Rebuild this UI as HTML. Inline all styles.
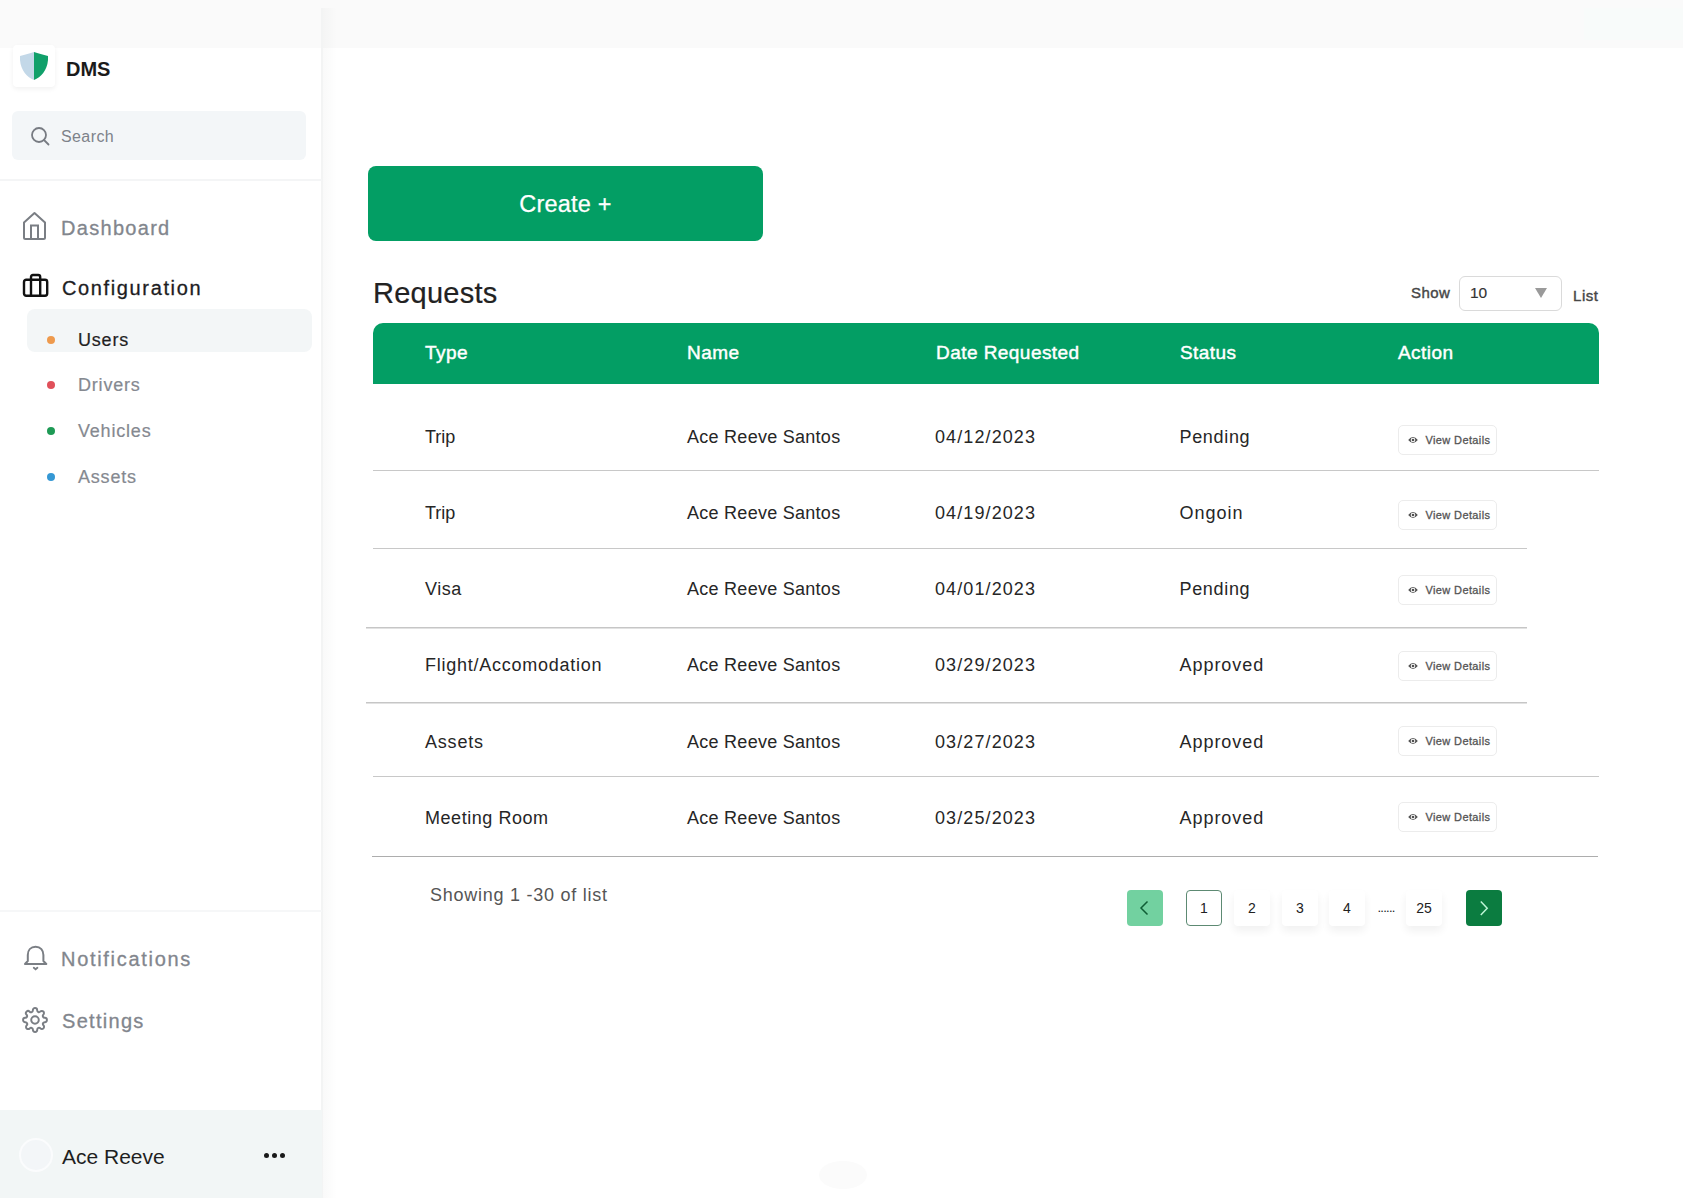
<!DOCTYPE html>
<html><head><meta charset="utf-8">
<style>
*{margin:0;padding:0;box-sizing:border-box}
html,body{width:1683px;height:1198px;overflow:hidden;background:#fff;font-family:"Liberation Sans",sans-serif}
.a{position:absolute;line-height:1;white-space:nowrap}
#topbar{position:absolute;left:0;top:0;width:1683px;height:48px;background:#fafafa}
#side{position:absolute;left:0;top:48px;width:322px;height:1150px;background:#fff}
#sline{position:absolute;left:321px;top:8px;width:2px;height:1190px;background:#f3f4f4}
#sshade{position:absolute;left:323px;top:8px;width:14px;height:1190px;background:linear-gradient(to right,rgba(0,20,10,.025),rgba(0,20,10,0))}
.logo{position:absolute;left:13px;top:45px;width:42px;height:42px;background:#fff;border-radius:4px;box-shadow:0 2px 5px rgba(0,0,0,.06)}
.search{position:absolute;left:12px;top:111px;width:294px;height:49px;background:#f3f6f8;border-radius:6px}
.hr1{position:absolute;left:0;top:179px;width:322px;height:2px;background:#f4f5f6}
.hr2{position:absolute;left:0;top:910px;width:322px;height:2px;background:#f6f7f8}
.nav{font-size:20px;color:#82868d;letter-spacing:1.3px;-webkit-text-stroke:.3px currentColor}
.sub{font-size:18px;color:#858990;letter-spacing:.8px;-webkit-text-stroke:.2px currentColor}
.dot{position:absolute;width:8px;height:8px;border-radius:50%}
.usersbg{position:absolute;left:27px;top:309px;width:285px;height:43px;background:#f3f6f7;border-radius:8px}
.foot{position:absolute;left:0;top:1110px;width:322px;height:88px;background:#f2f6f6}
.btn{position:absolute;left:368px;top:166px;width:395px;height:75px;background:#039e64;border-radius:8px}
.thead{position:absolute;left:373px;top:323px;width:1226px;height:61px;background:#039e64;border-radius:10px 10px 0 0}
.th{font-size:19px;color:#fff;-webkit-text-stroke:.45px #fff;letter-spacing:.45px}
.td{font-size:18px;color:#262626}
.dt{letter-spacing:1.1px}
.sep{position:absolute;height:1px;background:#c8c8c8}
.vd{position:absolute;left:1398px;width:99px;height:30px;border:1px solid #ececec;border-radius:5px;background:#fff}
.vd span{position:absolute;left:26.5px;top:8.8px;font-size:11px;line-height:1;color:#555;-webkit-text-stroke:.3px #555;letter-spacing:.38px}
.vd svg{position:absolute;left:9px;top:8.5px}
.pg{position:absolute;top:890px;width:36px;height:36px;border-radius:4px;background:#fff;font-size:14px;color:#222;text-align:center;line-height:36px}
.pgs{box-shadow:0 5px 8px rgba(0,0,0,.06)}
</style></head><body>
<div id="topbar"></div>
<div class="a" style="left:1584px;top:8px;width:99px;height:32px;background:#f8fbfa"></div>
<div id="side"></div>
<div id="sline"></div>
<div id="sshade"></div>

<!-- logo -->
<div class="logo"></div>
<svg class="a" style="left:19px;top:51px" width="30" height="30" viewBox="0 0 30 30">
  <path d="M15 1 L15 29 C8 26 2 20 1 9 L1 5 C6 4 11 2 15 1Z" fill="#c3d8e8"/>
  <path d="M15 1 C19 2 24 4 29 5 L29 9 C28 20 22 26 15 29Z" fill="#10a06a"/>
</svg>
<div class="a" style="left:66px;top:59px;font-size:20px;font-weight:bold;color:#1b1b1b">DMS</div>

<!-- search -->
<div class="search"></div>
<svg class="a" style="left:30px;top:126px" width="20" height="20" viewBox="0 0 20 20">
  <circle cx="9" cy="9" r="7" fill="none" stroke="#777b82" stroke-width="1.8"/>
  <path d="M14 14 L18.5 18.5" stroke="#777b82" stroke-width="1.8" stroke-linecap="round"/>
</svg>
<div class="a" style="left:61px;top:128.5px;font-size:16px;color:#7d828a;letter-spacing:.4px">Search</div>
<div class="hr1"></div>

<!-- nav -->
<svg class="a" style="left:22px;top:211px" width="26" height="30" viewBox="0 0 26 30">
  <path d="M2 11.5 L12.5 2 L23 11.5 L23 26.5 Q23 28 21.5 28 L3.5 28 Q2 28 2 26.5Z" fill="none" stroke="#7a7e84" stroke-width="2" stroke-linejoin="round"/>
  <path d="M9 28 L9 14.5 L16 14.5 L16 28" fill="none" stroke="#7a7e84" stroke-width="2"/>
</svg>
<div class="a nav" style="left:61px;top:217.8px">Dashboard</div>

<svg class="a" style="left:21px;top:273px" width="28" height="26" viewBox="0 0 28 26">
  <rect x="3" y="6.8" width="23.2" height="16" rx="2.2" fill="none" stroke="#111" stroke-width="2.4"/>
  <path d="M10 6.8 L10 4 Q10 2 12 2 L17.2 2 Q19.2 2 19.2 4 L19.2 6.8" fill="none" stroke="#111" stroke-width="2.4"/>
  <path d="M10 6.8 L10 22.8 M19.2 6.8 L19.2 22.8" stroke="#111" stroke-width="2.4"/>
</svg>
<div class="a nav" style="left:62px;top:277.7px;color:#1d1d1f;letter-spacing:1.63px">Configuration</div>

<div class="usersbg"></div>
<div class="dot" style="left:47.2px;top:335.6px;background:#ee9a4d"></div>
<div class="a sub" style="left:78px;top:330.5px;color:#1f1f1f">Users</div>
<div class="dot" style="left:47.2px;top:381.2px;background:#e0505a"></div>
<div class="a sub" style="left:78px;top:375.5px">Drivers</div>
<div class="dot" style="left:47.2px;top:427px;background:#1e9a55"></div>
<div class="a sub" style="left:78px;top:421.8px">Vehicles</div>
<div class="dot" style="left:47.2px;top:473px;background:#3598d4"></div>
<div class="a sub" style="left:78px;top:467.5px">Assets</div>

<div class="hr2"></div>
<svg class="a" style="left:22px;top:944px" width="28" height="30" viewBox="0 0 28 30">
  <path d="M13.6 2.8 C8.6 2.8 5.8 6.3 5.8 11 L5.8 17 L3 20 L24.3 20 L21.4 17 L21.4 11 C21.4 6.3 18.6 2.8 13.6 2.8Z" fill="none" stroke="#7a7e84" stroke-width="2" stroke-linejoin="round"/>
  <path d="M11.8 23.8 L13.6 25.2 L15.4 23.8" fill="none" stroke="#7a7e84" stroke-width="1.9" stroke-linecap="round"/>
</svg>
<div class="a nav" style="left:61px;top:949px;letter-spacing:1.7px">Notifications</div>

<svg class="a" style="left:22.2px;top:1007px" width="26" height="26" viewBox="0 0 24 24">
  <path d="M12 15.5a3.5 3.5 0 1 0 0-7 3.5 3.5 0 0 0 0 7Z" fill="none" stroke="#7a7e84" stroke-width="1.8"/>
  <path d="M19.4 15a1.65 1.65 0 0 0 .33 1.82l.06.06a2 2 0 1 1-2.83 2.83l-.06-.06a1.65 1.65 0 0 0-1.82-.33 1.65 1.65 0 0 0-1 1.51V21a2 2 0 1 1-4 0v-.09A1.65 1.65 0 0 0 9 19.4a1.65 1.65 0 0 0-1.82.33l-.06.06a2 2 0 1 1-2.83-2.83l.06-.06A1.65 1.65 0 0 0 4.68 15a1.65 1.65 0 0 0-1.51-1H3a2 2 0 1 1 0-4h.09A1.65 1.650 0 0 0 4.6 9a1.65 1.65 0 0 0-.33-1.82l-.06-.06a2 2 0 1 1 2.83-2.83l.06.06A1.65 1.65 0 0 0 9 4.68a1.65 1.65 0 0 0 1-1.51V3a2 2 0 1 1 4 0v.09a1.65 1.65 0 0 0 1 1.51 1.65 1.65 0 0 0 1.82-.33l.06-.06a2 2 0 1 1 2.83 2.83l-.06.06A1.65 1.65 0 0 0 19.4 9a1.65 1.65 0 0 0 1.51 1H21a2 2 0 1 1 0 4h-.09a1.65 1.65 0 0 0-1.51 1Z" fill="none" stroke="#7a7e84" stroke-width="1.8"/>
</svg>
<div class="a nav" style="left:62px;top:1010.5px">Settings</div>

<div class="foot"></div>
<div class="a" style="left:19px;top:1138px;width:34px;height:34px;border-radius:50%;border:2px solid #fbfcfd;background:#f3f6f8"></div>
<div class="a" style="left:62px;top:1146px;font-size:21px;color:#1f1f1f">Ace Reeve</div>
<div class="a" style="left:264px;top:1152.5px;width:5px;height:5px;border-radius:50%;background:#1a1a1a"></div>
<div class="a" style="left:272px;top:1152.5px;width:5px;height:5px;border-radius:50%;background:#1a1a1a"></div>
<div class="a" style="left:280px;top:1152.5px;width:5px;height:5px;border-radius:50%;background:#1a1a1a"></div>

<!-- main -->
<div class="btn"></div>
<div class="a" style="left:368px;width:395px;text-align:center;top:192.5px;font-size:23.5px;color:#fff;letter-spacing:.2px;-webkit-text-stroke:.25px #fff">Create +</div>

<div class="a" style="left:373px;top:279.3px;font-size:29px;color:#222;letter-spacing:.25px;-webkit-text-stroke:.2px #222">Requests</div>

<div class="a" style="left:1411px;top:285px;font-size:15px;color:#474747;-webkit-text-stroke:.4px #474747;letter-spacing:.45px">Show</div>
<div class="a" style="left:1459px;top:276px;width:103px;height:35px;border:1.5px solid #dadada;border-radius:6px"></div>
<div class="a" style="left:1470px;top:285px;font-size:15.5px;color:#333;-webkit-text-stroke:.15px #333">10</div>
<svg class="a" style="left:1535px;top:288px" width="12" height="10" viewBox="0 0 12 10"><path d="M0 0 L12 0 L6 10Z" fill="#9a9a9a"/></svg>
<div class="a" style="left:1573px;top:287.5px;font-size:15px;color:#474747;-webkit-text-stroke:.4px #474747;letter-spacing:.55px">List</div>

<div class="thead"></div>
<div class="a th" style="left:425px;top:342.5px">Type</div>
<div class="a th" style="left:687px;top:342.5px">Name</div>
<div class="a th" style="left:936px;top:342.5px">Date Requested</div>
<div class="a th" style="left:1180px;top:342.5px">Status</div>
<div class="a th" style="left:1398px;top:342.5px">Action</div>
<!-- ROWS -->
<div class="a td" style="left:425px;top:427.8px;letter-spacing:0px">Trip</div>
<div class="a td" style="left:687px;top:427.8px;letter-spacing:.27px">Ace Reeve Santos</div>
<div class="a td dt" style="left:935px;top:427.8px">04/12/2023</div>
<div class="a td" style="left:1179.5px;top:427.8px;letter-spacing:0.67px">Pending</div>
<div class="vd" style="top:425px"><svg width="10" height="10" viewBox="0 0 10 10"><path d="M0.2 5 Q5 -0.8 9.8 5 Q5 10.8 0.2 5Z" fill="#505050"/><circle cx="5" cy="5" r="2.3" fill="#fff"/><circle cx="5" cy="5" r="1.3" fill="#505050"/></svg><span>View Details</span></div>
<div class="a td" style="left:425px;top:503.8px;letter-spacing:0px">Trip</div>
<div class="a td" style="left:687px;top:503.8px;letter-spacing:.27px">Ace Reeve Santos</div>
<div class="a td dt" style="left:935px;top:503.8px">04/19/2023</div>
<div class="a td" style="left:1179.5px;top:503.8px;letter-spacing:1.0px">Ongoin</div>
<div class="vd" style="top:500px"><svg width="10" height="10" viewBox="0 0 10 10"><path d="M0.2 5 Q5 -0.8 9.8 5 Q5 10.8 0.2 5Z" fill="#505050"/><circle cx="5" cy="5" r="2.3" fill="#fff"/><circle cx="5" cy="5" r="1.3" fill="#505050"/></svg><span>View Details</span></div>
<div class="a td" style="left:425px;top:579.8px;letter-spacing:0.5px">Visa</div>
<div class="a td" style="left:687px;top:579.8px;letter-spacing:.27px">Ace Reeve Santos</div>
<div class="a td dt" style="left:935px;top:579.8px">04/01/2023</div>
<div class="a td" style="left:1179.5px;top:579.8px;letter-spacing:0.67px">Pending</div>
<div class="vd" style="top:575px"><svg width="10" height="10" viewBox="0 0 10 10"><path d="M0.2 5 Q5 -0.8 9.8 5 Q5 10.8 0.2 5Z" fill="#505050"/><circle cx="5" cy="5" r="2.3" fill="#fff"/><circle cx="5" cy="5" r="1.3" fill="#505050"/></svg><span>View Details</span></div>
<div class="a td" style="left:425px;top:656.0px;letter-spacing:0.75px">Flight/Accomodation</div>
<div class="a td" style="left:687px;top:656.0px;letter-spacing:.27px">Ace Reeve Santos</div>
<div class="a td dt" style="left:935px;top:656.0px">03/29/2023</div>
<div class="a td" style="left:1179.5px;top:656.0px;letter-spacing:0.95px">Approved</div>
<div class="vd" style="top:651px"><svg width="10" height="10" viewBox="0 0 10 10"><path d="M0.2 5 Q5 -0.8 9.8 5 Q5 10.8 0.2 5Z" fill="#505050"/><circle cx="5" cy="5" r="2.3" fill="#fff"/><circle cx="5" cy="5" r="1.3" fill="#505050"/></svg><span>View Details</span></div>
<div class="a td" style="left:425px;top:732.6px;letter-spacing:0.8px">Assets</div>
<div class="a td" style="left:687px;top:732.6px;letter-spacing:.27px">Ace Reeve Santos</div>
<div class="a td dt" style="left:935px;top:732.6px">03/27/2023</div>
<div class="a td" style="left:1179.5px;top:732.6px;letter-spacing:0.95px">Approved</div>
<div class="vd" style="top:726px"><svg width="10" height="10" viewBox="0 0 10 10"><path d="M0.2 5 Q5 -0.8 9.8 5 Q5 10.8 0.2 5Z" fill="#505050"/><circle cx="5" cy="5" r="2.3" fill="#fff"/><circle cx="5" cy="5" r="1.3" fill="#505050"/></svg><span>View Details</span></div>
<div class="a td" style="left:425px;top:808.6px;letter-spacing:0.55px">Meeting Room</div>
<div class="a td" style="left:687px;top:808.6px;letter-spacing:.27px">Ace Reeve Santos</div>
<div class="a td dt" style="left:935px;top:808.6px">03/25/2023</div>
<div class="a td" style="left:1179.5px;top:808.6px;letter-spacing:0.95px">Approved</div>
<div class="vd" style="top:802px"><svg width="10" height="10" viewBox="0 0 10 10"><path d="M0.2 5 Q5 -0.8 9.8 5 Q5 10.8 0.2 5Z" fill="#505050"/><circle cx="5" cy="5" r="2.3" fill="#fff"/><circle cx="5" cy="5" r="1.3" fill="#505050"/></svg><span>View Details</span></div>
<div class="sep" style="top:470px;left:373px;width:1226px;background:#c8c8c8"></div>
<div class="sep" style="top:548px;left:373px;width:1154px;background:#c8c8c8"></div>
<div class="sep" style="top:627px;left:366px;width:1161px;background:#c6c6c6;box-shadow:0 1px 0 #e2e2e2"></div>
<div class="sep" style="top:702px;left:366px;width:1161px;background:#c6c6c6;box-shadow:0 1px 0 #e2e2e2"></div>
<div class="sep" style="top:776px;left:373px;width:1226px;background:#c8c8c8"></div>
<div class="sep" style="top:856px;left:372px;width:1226px;background:#adadad"></div>
<div class="a td" style="left:430px;top:885.8px;color:#555;letter-spacing:.75px">Showing 1 -30 of list</div>
<div class="pg" style="left:1127px;background:#72d1a0"><svg style="position:absolute;left:11px;top:10px" width="14" height="16" viewBox="0 0 14 16"><path d="M9.5 1.5 L3 8 L9.5 14.5" fill="none" stroke="#0f5e35" stroke-width="1.5"/></svg></div>
<div class="pg" style="left:1186px;border:1px solid #5d8a73;line-height:34px">1</div>
<div class="pg pgs" style="left:1234px">2</div>
<div class="pg pgs" style="left:1282px">3</div>
<div class="pg pgs" style="left:1329px">4</div>
<div class="pg pgs" style="left:1406px">25</div>
<div class="a" style="left:1377.5px;top:901px;font-size:13px;color:#222;letter-spacing:-.75px">......</div>
<div class="pg" style="left:1466px;background:#0b7c40"><svg style="position:absolute;left:11px;top:10px" width="14" height="16" viewBox="0 0 14 16"><path d="M3.8 1.5 L10.2 8.2 L3.8 14.9" fill="none" stroke="#bdf5d6" stroke-width="1.5"/></svg></div>
<div class="a" style="left:819px;top:1161px;width:48px;height:28px;border-radius:50%;background:#fbfbfb"></div>
</body></html>
